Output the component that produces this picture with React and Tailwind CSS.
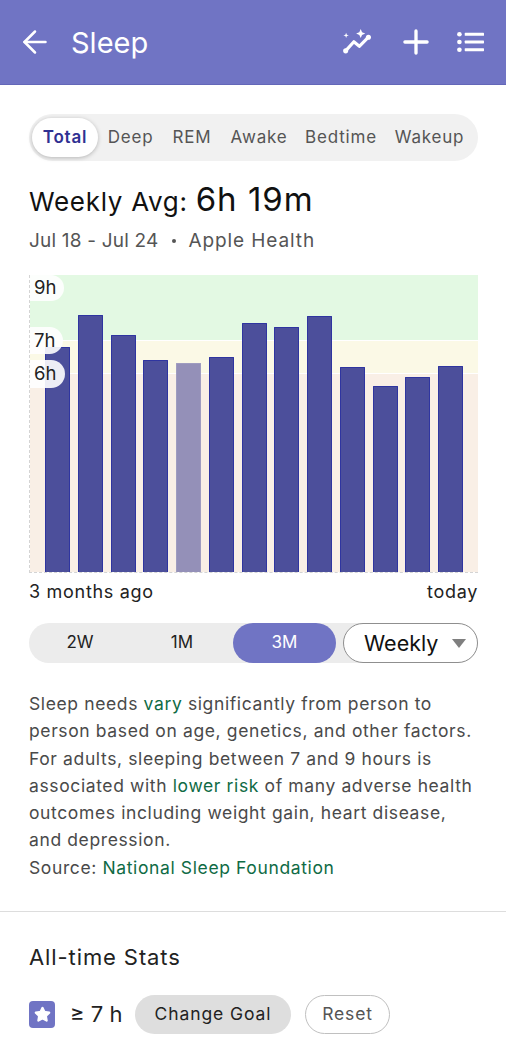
import React from "react";
import { ArrowLeft, Plus, Star } from "lucide-react";

const bars = [347, 315, 335, 359.5, 363, 357, 323, 327, 316, 367, 386, 377, 366];

function Insights() {
  return (
    <svg width="31" height="25.5" viewBox="0 0 34 28" fill="none">
      <path d="M4 24 L13 14 L19 19 L29 9" stroke="white" strokeWidth="3.4" strokeLinejoin="round" strokeLinecap="round" />
      <circle cx="4" cy="24" r="2.8" fill="white" />
      <circle cx="29" cy="9" r="2.8" fill="white" />
      <path d="M20.5 0 L22 3.5 L25.5 5 L22 6.5 L20.5 10 L19 6.5 L15.5 5 L19 3.5 Z" fill="white" />
      <path d="M4.5 4 L5.3 6.2 L7.5 7 L5.3 7.8 L4.5 10 L3.7 7.8 L1.5 7 L3.7 6.2 Z" fill="white" />
    </svg>
  );
}

function ListIcon() {
  return (
    <svg width="27" height="22" viewBox="0 0 28 22" fill="white">
      <circle cx="2.5" cy="3" r="2.4" />
      <circle cx="2.5" cy="11" r="2.4" />
      <circle cx="2.5" cy="19" r="2.4" />
      <rect x="8" y="1.5" width="20" height="3" rx="0.6" />
      <rect x="8" y="9.5" width="20" height="3" rx="0.6" />
      <rect x="8" y="17.5" width="20" height="3" rx="0.6" />
    </svg>
  );
}

function Tab({ children, w, active }) {
  return (
    <div
      className={
        active
          ? "h-[39px] w-[66px] flex items-center justify-center rounded-full bg-white shadow-[0_1px_4px_rgba(0,0,0,0.25)] font-semibold text-[#2f3192] text-[17px] tracking-[0.8px]"
          : "h-[39px] flex items-center justify-center text-[#555555] text-[17px] tracking-[0.8px]"
      }
      style={w ? { width: w } : undefined}
    >
      {children}
    </div>
  );
}

function YLabel({ children, cls }) {
  return (
    <div className={"absolute left-0 flex items-center pl-[4px] rounded-r-full bg-white/90 text-[18.5px] text-[#222222] " + cls}>
      {children}
    </div>
  );
}

export default function App() {
  return (
    <div className="w-[506px] h-[1040px] overflow-hidden bg-white font-['Inter','Noto_Sans',sans-serif]">
      <header className="h-[85px] bg-[#7074c4] border-b border-[#6367b8] flex items-center pl-[17px] pr-[22px] text-white">
        <ArrowLeft size={36} strokeWidth={1.7} />
        <div className="ml-[18px] text-[29px] leading-none flex-1">Sleep</div>
        <Insights />
        <div className="ml-[24px] flex"><Plus size={38} strokeWidth={2.1} /></div>
        <div className="ml-[22px] flex"><ListIcon /></div>
      </header>

      <main className="pl-[29px] pr-[28px] pt-[29px]">
        <div className="h-[47px] rounded-full bg-[#f1f1f1] flex items-center pl-[3px]">
          <Tab active>Total</Tab>
          <Tab w={65}>Deep</Tab>
          <Tab w={58}>REM</Tab>
          <Tab w={76}>Awake</Tab>
          <Tab w={88}>Bedtime</Tab>
          <Tab w={89}>Wakeup</Tab>
        </div>

        <div className="mt-[14px] flex items-baseline h-[40px] text-[#111111]">
          <span className="text-[26px] tracking-[0.7px]">Weekly Avg:</span>
          <span className="ml-[8px] text-[33px] tracking-[1px]">6h 19m</span>
        </div>
        <div className="mt-[13px] h-[26px] text-[19px] leading-[26px] text-[#555555] tracking-[0.2px] flex items-center">
          <span>Jul 18 - Jul 24</span>
          <span className="mx-[13px] w-[4px] h-[4px] rounded-full bg-[#555555]" />
          <span className="tracking-[0.9px]">Apple Health</span>
        </div>

        <div className="relative mt-[21px] h-[298px] border-l border-b border-dashed border-[#d4d4d4] grid">
          <div className="col-start-1 row-start-1 flex flex-col">
            <div className="h-[65px] bg-[#e3f9e3]" />
            <div className="h-[1px] bg-white" />
            <div className="h-[32px] bg-[#fbf9e6]" />
            <div className="h-[1px] bg-white" />
            <div className="flex-1 bg-[#f9efe6]" />
          </div>
          <div className="col-start-1 row-start-1 flex items-end justify-between pl-[15px] pr-[15px]">
            {bars.map((top, i) => (
              <div
                key={i}
                className={
                  "w-[25px] rounded-t-[1px] border-x border-t " +
                  (i === 4 ? "bg-[#9490b8] border-[#9f9cc0]" : "bg-[#4c4f9b] border-[#2f35a0]")
                }
                style={{ height: 572 - top }}
              />
            ))}
          </div>
          <YLabel cls="top-0 w-[34px] h-[26px]">9h</YLabel>
          <YLabel cls="top-[52px] w-[33px] h-[27px]">7h</YLabel>
          <YLabel cls="top-[85px] w-[35px] h-[28px]">6h</YLabel>
        </div>

        <div className="mt-[6px] flex justify-between text-[18px] leading-[26px] text-[#222222] tracking-[0.7px]">
          <span>3 months ago</span>
          <span>today</span>
        </div>

        <div className="mt-[18px] h-[40px] rounded-full bg-[#ececec] flex text-[#222222] text-[17px]">
          <div className="w-[102px] flex items-center justify-center">2W</div>
          <div className="w-[102px] flex items-center justify-center">1M</div>
          <div className="w-[103px] flex items-center justify-center rounded-full bg-[#7074c4] text-white">3M</div>
          <div className="ml-[7px] w-[135px] rounded-full border border-[#8f8f8f] bg-white flex items-center pl-[20px] text-[21.5px] text-[#111111]">
            Weekly
            <svg className="ml-[14px]" width="14" height="9" viewBox="0 0 14 9"><path d="M0 0 H14 L7 9 Z" fill="#7f7f7f" /></svg>
          </div>
        </div>

        <p className="mt-[27px] text-[17.5px] tracking-[0.62px] leading-[27.3px] text-[#4a4a4a] whitespace-nowrap">
          Sleep needs <span className="text-[#0f6b45]">vary</span> significantly from person to<br />
          person based on age, genetics, and other factors.<br />
          For adults, sleeping between 7 and 9 hours is<br />
          associated with <span className="text-[#0f6b45]">lower risk</span> of many adverse health<br />
          outcomes including weight gain, heart disease,<br />
          and depression.<br />
          Source: <span className="text-[#0f6b45]">National Sleep Foundation</span>
        </p>
      </main>

      <div className="mt-[30px] h-[1px] bg-[#dddddd]" />

      <section className="px-[29px]">
        <div className="mt-[30px] text-[22px] tracking-[0.9px] leading-[30px] text-[#222222]">All-time Stats</div>
        <div className="mt-[23px] flex items-center">
          <div className="w-[26px] h-[27px] rounded-[4px] bg-[#7074c4] flex items-center justify-center">
            <Star size={17} fill="white" stroke="white" />
          </div>
          <div className="ml-[15px] w-[65px] text-[22px] text-[#222222]">≥ 7 h</div>
          <div className="w-[156px] h-[39px] rounded-full bg-[#dedede] flex items-center justify-center text-[17.5px] tracking-[0.9px] text-[#222222]">Change Goal</div>
          <div className="ml-[14px] w-[85px] h-[39px] rounded-full border border-[#c0c0c0] flex items-center justify-center text-[17.5px] tracking-[0.8px] text-[#555555]">Reset</div>
        </div>
      </section>
    </div>
  );
}
